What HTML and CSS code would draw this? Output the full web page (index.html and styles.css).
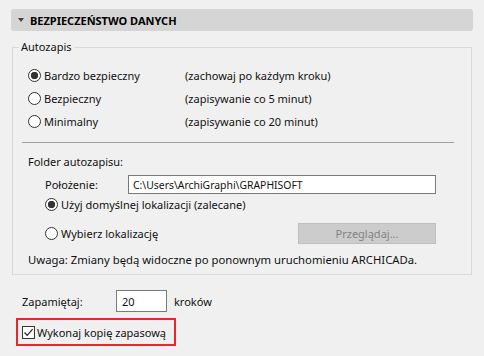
FILE: index.html
```html
<!DOCTYPE html>
<html lang="pl">
<head>
  <meta charset="UTF-8" />
  <title>Bezpieczeństwo danych</title>
  <link rel="stylesheet" href="styles.css">
</head>
<body>
  <div class="panel">
    <div class="header">
      <span class="arrow"></span>
      <span class="header-title">BEZPIECZEŃSTWO DANYCH</span>
    </div>

    <fieldset class="group">
      <legend>Autozapis</legend>

      <div class="modes">
        <label class="radio"><input type="radio" name="mode" checked> Bardzo bezpieczny</label>
        <span class="hint">(zachowaj po każdym kroku)</span>
        <label class="radio"><input type="radio" name="mode"> Bezpieczny</label>
        <span class="hint">(zapisywanie co 5 minut)</span>
        <label class="radio"><input type="radio" name="mode"> Minimalny</label>
        <span class="hint">(zapisywanie co 20 minut)</span>
      </div>

      <hr class="separator">

      <div class="folder">
        <div class="folder-title">Folder autozapisu:</div>
        <div class="path-row">
          <span class="path-label">Położenie:</span>
          <input class="path-input" type="text" value="C:\Users\ArchiGraphi\GRAPHISOFT">
        </div>
        <label class="radio loc"><input type="radio" name="loc" checked> Użyj domyślnej lokalizacji (zalecane)</label>
        <div class="browse-row">
          <label class="radio loc"><input type="radio" name="loc"> Wybierz lokalizację</label>
          <button class="browse" disabled>Przeglądaj...</button>
        </div>
        <div class="note">Uwaga: Zmiany będą widoczne po ponownym uruchomieniu ARCHICADa.</div>
      </div>
    </fieldset>

    <div class="steps-row">
      <span class="steps-label">Zapamiętaj:</span>
      <input class="steps-input" type="text" value="20">
      <span>kroków</span>
    </div>

    <label class="backup">
      <span class="checkbox">
        <svg width="11" height="11" viewBox="0 0 11 11"><path d="M1.5 5.5 L4.2 8.3 L9.6 2.2" fill="none" stroke="#222" stroke-width="1.2"/></svg>
      </span>
      Wykonaj kopię zapasową
    </label>
  </div>
</body>
</html>
```

FILE: styles.css
```css
* {
  box-sizing: border-box;
}

body {
  margin: 0;
  background-color: #f0f0f0;
  font-family: 'Noto Sans', 'Open Sans', sans-serif;
  font-size: 11px;
  color: #111;
}

.panel {
  padding: 9px 11px;
}

.header {
  display: flex;
  align-items: center;
  height: 22px;
  padding-left: 7px;
  background-color: #d5d5d5;
  border-radius: 3px;
}

.arrow {
  width: 0;
  height: 0;
  border-left: 3.5px solid transparent;
  border-right: 3.5px solid transparent;
  border-top: 4px solid #444;
  margin-right: 6px;
}

.header-title {
  font-weight: bold;
  font-size: 11px;
  color: #000;
}

.group {
  margin: 8px 0 0 1px;
  padding: 0 0 6px 0;
  width: 460px;
  border: 1px solid #d9d9d9;
}

.group legend {
  margin-left: 6px;
  padding: 0 2px;
  line-height: 16px;
}

.modes {
  display: grid;
  grid-template-columns: 157px auto;
  grid-auto-rows: 23px;
  align-items: center;
  padding: 9px 0 0 15px;
}

.radio {
  display: flex;
  align-items: center;
  gap: 3px;
}

.radio input {
  appearance: none;
  width: 13px;
  height: 13px;
  margin: 0;
  border: 1px solid #333;
  border-radius: 50%;
  background-color: #fff;
}

.radio input:checked {
  background: radial-gradient(circle, #333 0 3.4px, #fff 4px);
}

.separator {
  margin: 9px 17px 0 9px;
  border: none;
  border-top: 1px solid #a0a0a0;
}

.folder {
  padding: 11px 0 0 15px;
}

.folder-title {
  line-height: 16px;
}

.path-row {
  display: flex;
  align-items: center;
  height: 19px;
  margin-top: 5px;
  padding-left: 17px;
}

.path-label {
  width: 83px;
}

.path-input {
  width: 308px;
  height: 19px;
  padding: 0 4px;
  border: 1px solid #7a7a7a;
  background-color: #fff;
  font-family: inherit;
  font-size: 10.4px;
  color: #111;
}

.loc {
  margin-left: 17px;
  height: 20px;
}

.browse-row {
  display: flex;
  align-items: center;
  justify-content: space-between;
  width: 408px;
  height: 21px;
  margin-top: 9px;
}

.browse {
  width: 138px;
  height: 21px;
  background-color: #cccccc;
  border: 1px solid #bfbfbf;
  color: #838383;
  font-family: inherit;
  font-size: inherit;
}

.note {
  margin-top: 8px;
  line-height: 16px;
  font-size: 11.3px;
}

.steps-row {
  display: flex;
  align-items: center;
  margin: 15px 0 0 11px;
}

.steps-label {
  width: 94px;
}

.steps-input {
  width: 51px;
  height: 22px;
  padding: 0 5px;
  margin-right: 7px;
  border: 1px solid #7a7a7a;
  background-color: #fff;
  font-family: inherit;
  font-size: inherit;
  color: #111;
}

.backup {
  display: inline-flex;
  align-items: center;
  gap: 2px;
  margin: 6px 0 0 5px;
  width: 160px;
  height: 28px;
  padding-left: 4px;
  border: 2px solid #e8262b;
}

.checkbox {
  display: flex;
  width: 13px;
  height: 13px;
  border: 1px solid #333;
  background-color: #fff;
}
```
